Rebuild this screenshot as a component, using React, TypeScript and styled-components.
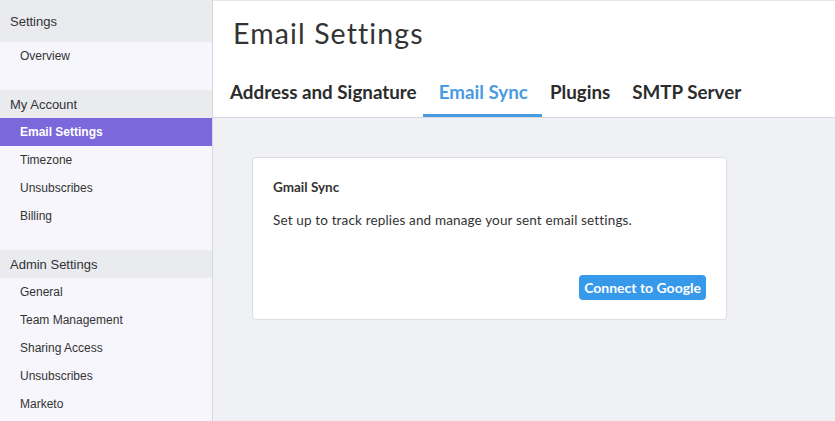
import React from "react";
import styled, { createGlobalStyle } from "styled-components";

const Global = createGlobalStyle`
  html, body { margin: 0; padding: 0; height: 100%; }
  body { background: #f0f1f5; font-family: "Liberation Sans", Arial, sans-serif; }
  #root { height: 100%; }
`;

const Layout = styled.div`
  display: flex;
  width: 835px;
  height: 421px;
  overflow: hidden;
`;

const Sidebar = styled.nav`
  width: 212px;
  flex-shrink: 0;
  background: #f6f6fc;
  border-right: 1px solid #d6d6dc;
  display: flex;
  flex-direction: column;
`;

const Section = styled.div`
  display: flex;
  flex-direction: column;
  & + & { margin-top: 20px; }
`;

const SectionHeader = styled.div<{ $tall?: boolean }>`
  height: ${(p) => (p.$tall ? 42 : 28)}px;
  padding: 0 10px;
  display: flex;
  align-items: center;
  background: #e9ebef;
  color: #333;
  font-size: 13px;
`;

const NavItem = styled.div<{ $active?: boolean }>`
  height: 28px;
  padding: 0 20px;
  display: flex;
  align-items: center;
  font-size: 12px;
  color: ${(p) => (p.$active ? "#fff" : "#333")};
  background: ${(p) => (p.$active ? "#7b69db" : "transparent")};
  font-weight: ${(p) => (p.$active ? 700 : 400)};
`;

const Main = styled.main`
  flex: 1;
  display: flex;
  flex-direction: column;
  font-family: Lato, "Open Sans", sans-serif;
`;

const Header = styled.header`
  background: #fff;
  border-bottom: 1px solid #d8d9de;
  border-top: 1px solid #e6e7ea;
  padding: 0 0 0 17px;
  height: 118px;
  box-sizing: border-box;
  display: flex;
  flex-direction: column;
`;

const Title = styled.h1`
  margin: 14px 0 0 3px;
  font-size: 28.5px;
  font-weight: 400;
  letter-spacing: 1.1px;
  color: #333;
  line-height: 36px;
`;

const Tabs = styled.div`
  margin-top: auto;
  display: flex;
  height: 46px;
`;

const Tab = styled.div<{ $active?: boolean }>`
  position: relative;
  padding: 0 11px 5px;
  display: flex;
  align-items: center;
  font-size: 18.8px;
  font-weight: 700;
  color: ${(p) => (p.$active ? "#4a9be2" : "#2c2c2c")};
  &:first-child { padding-left: 0; }
  ${(p) =>
    p.$active &&
    `&::after {
      content: "";
      position: absolute;
      left: -5px;
      right: -3px;
      bottom: 0;
      height: 3px;
      background: #4a9be2;
    }`}
`;

const Content = styled.section`
  flex: 1;
  padding: 39px 0 0 39px;
`;

const Card = styled.div`
  width: 475px;
  height: 163px;
  box-sizing: border-box;
  background: #fff;
  border: 1px solid #dcdde2;
  border-radius: 4px;
  padding: 21px 20px 19px 20px;
  display: flex;
  flex-direction: column;
`;

const CardTitle = styled.div`
  font-size: 13.5px;
  font-weight: 700;
  color: #333;
  line-height: 16px;
`;

const CardText = styled.p`
  margin: 17px 0 0;
  font-size: 13.5px;
  letter-spacing: 0.15px;
  color: #333;
  line-height: 16px;
`;

const Actions = styled.div`
  margin-top: auto;
  display: flex;
  justify-content: flex-end;
`;

const Button = styled.button`
  height: 25px;
  padding: 0 5px;
  border: none;
  border-radius: 4px;
  background: #3799ea;
  color: #fff;
  font-family: Lato, "Open Sans", sans-serif;
  font-size: 14px;
  font-weight: 700;
  cursor: pointer;
`;

export default function App() {
  return (
    <>
      <Global />
      <Layout>
        <Sidebar>
          <Section>
            <SectionHeader $tall>Settings</SectionHeader>
            <NavItem>Overview</NavItem>
          </Section>
          <Section>
            <SectionHeader>My Account</SectionHeader>
            <NavItem $active>Email Settings</NavItem>
            <NavItem>Timezone</NavItem>
            <NavItem>Unsubscribes</NavItem>
            <NavItem>Billing</NavItem>
          </Section>
          <Section>
            <SectionHeader>Admin Settings</SectionHeader>
            <NavItem>General</NavItem>
            <NavItem>Team Management</NavItem>
            <NavItem>Sharing Access</NavItem>
            <NavItem>Unsubscribes</NavItem>
            <NavItem>Marketo</NavItem>
          </Section>
        </Sidebar>
        <Main>
          <Header>
            <Title>Email Settings</Title>
            <Tabs>
              <Tab>Address and Signature</Tab>
              <Tab $active>Email Sync</Tab>
              <Tab>Plugins</Tab>
              <Tab>SMTP Server</Tab>
            </Tabs>
          </Header>
          <Content>
            <Card>
              <CardTitle>Gmail Sync</CardTitle>
              <CardText>Set up to track replies and manage your sent email settings.</CardText>
              <Actions>
                <Button>Connect to Google</Button>
              </Actions>
            </Card>
          </Content>
        </Main>
      </Layout>
    </>
  );
}
